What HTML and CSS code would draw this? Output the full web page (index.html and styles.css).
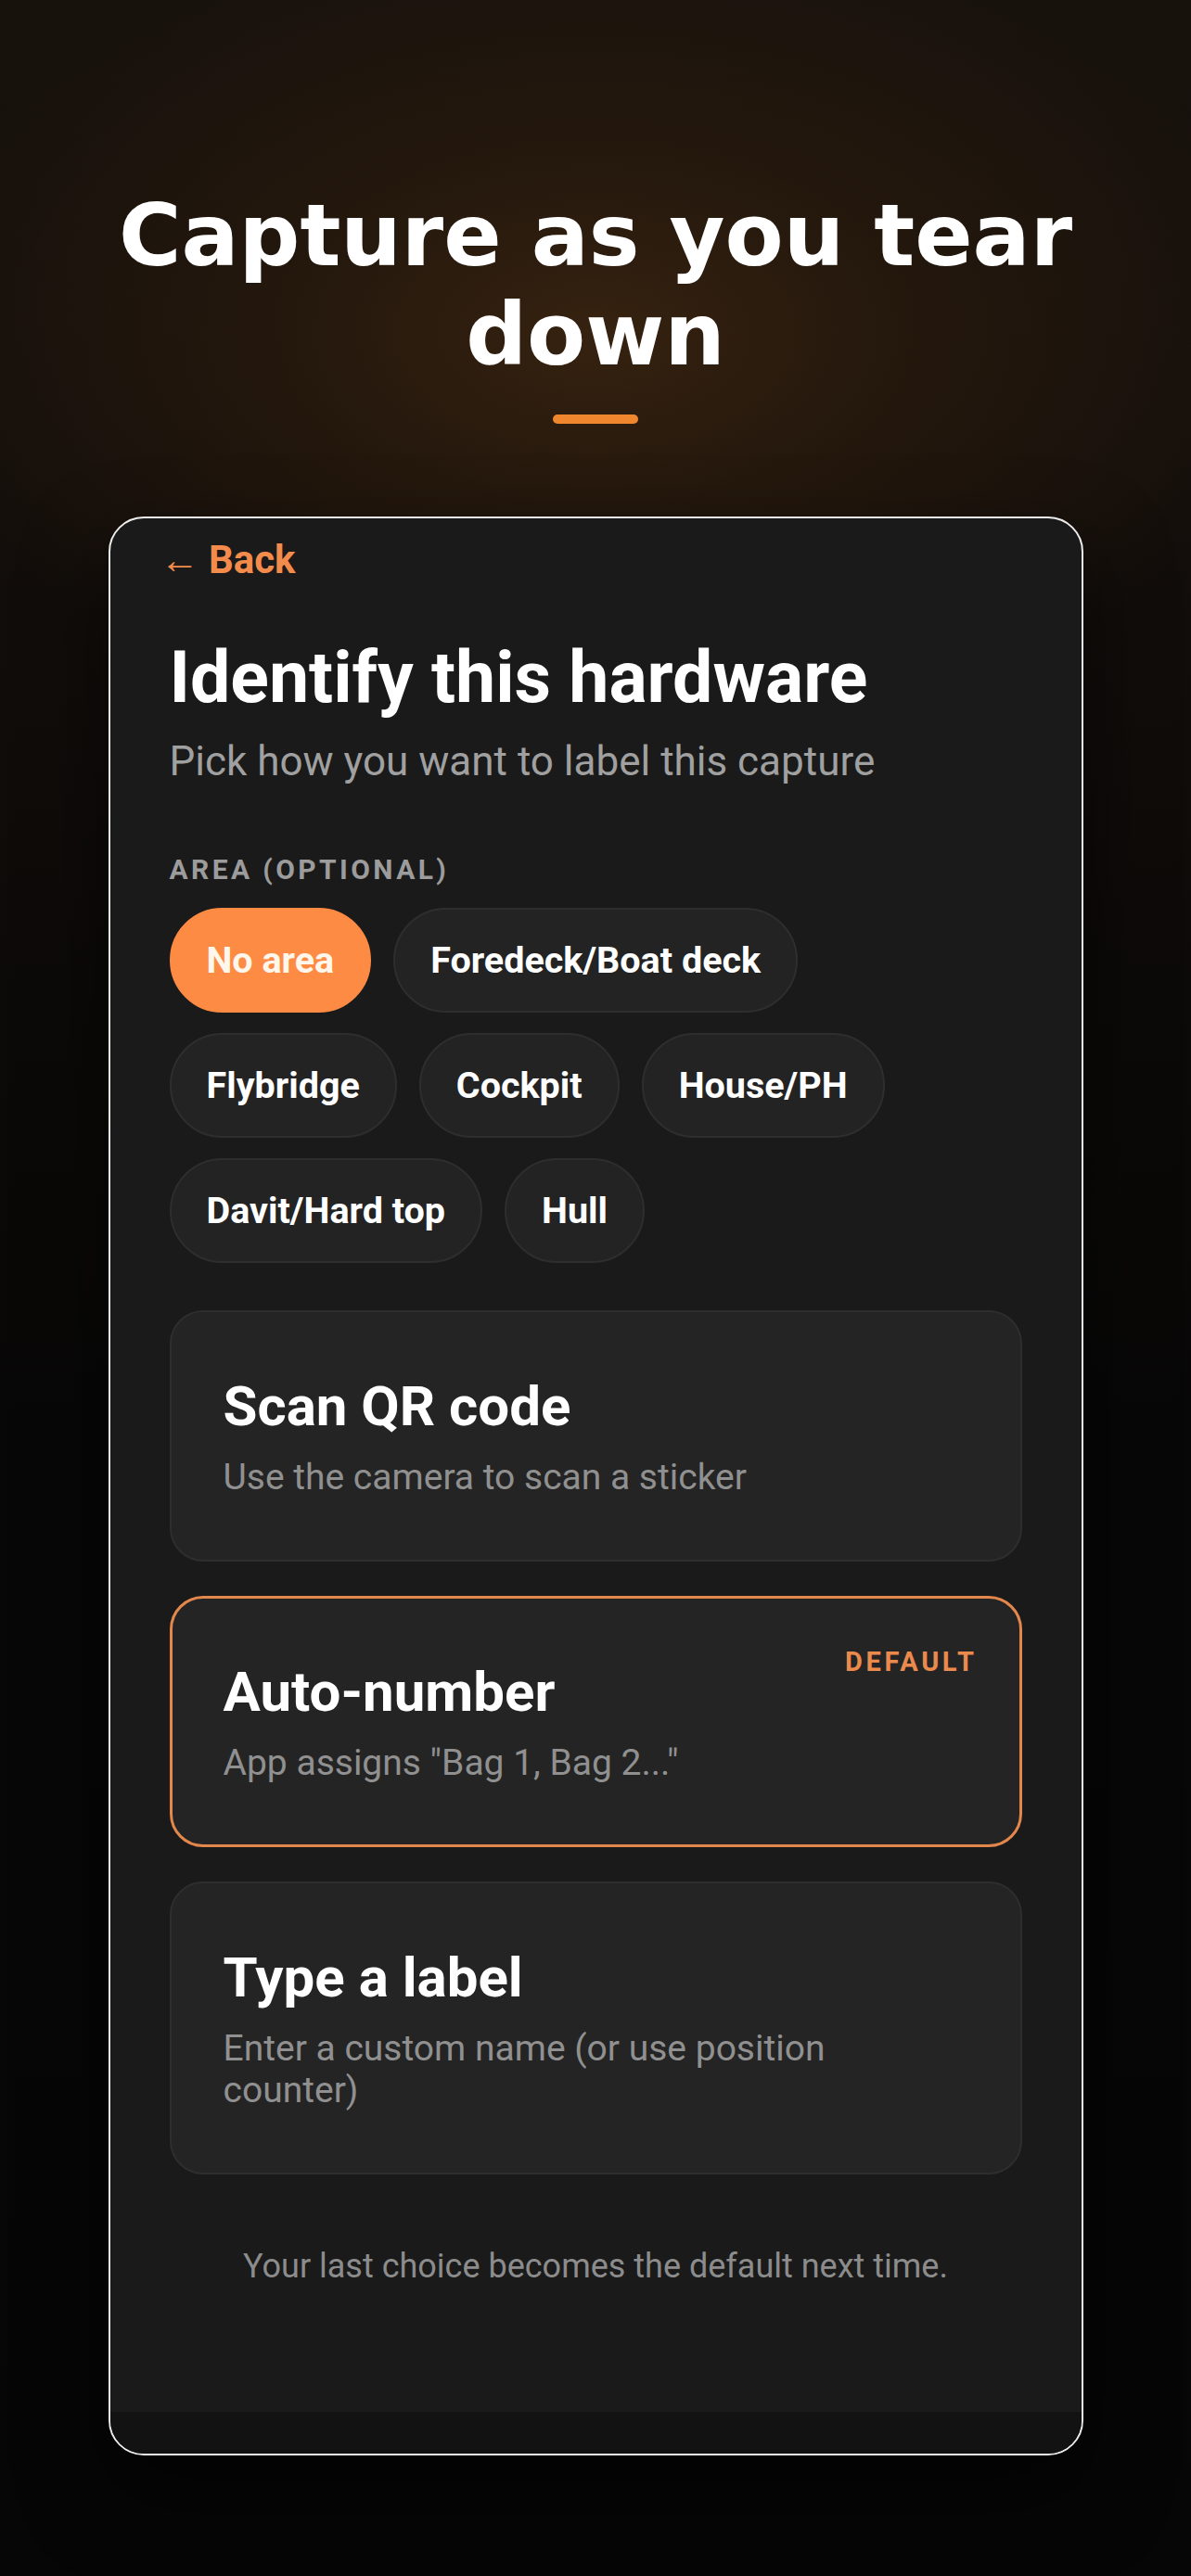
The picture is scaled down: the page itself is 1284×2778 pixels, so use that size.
FILE: index.html
```html
<!DOCTYPE html>
<html lang="en">
<head>
<meta charset="utf-8">
<title>Capture as you tear down</title>
<link rel="stylesheet" href="styles.css">
</head>
<body>
<header class="hero">
  <h1 class="hero-title">Capture as you tear down</h1>
  <div class="hero-bar"></div>
</header>
<main class="phone">
  <div class="screen">
    <a class="back"><span class="back-arrow">←</span> Back</a>
    <h2 class="screen-title">Identify this hardware</h2>
    <p class="screen-sub">Pick how you want to label this capture</p>
    <div class="section-label">AREA (OPTIONAL)</div>
    <div class="chips">
      <span class="chip chip--active">No area</span>
      <span class="chip">Foredeck/Boat deck</span>
      <span class="chip">Flybridge</span>
      <span class="chip">Cockpit</span>
      <span class="chip">House/PH</span>
      <span class="chip">Davit/Hard top</span>
      <span class="chip">Hull</span>
    </div>
    <div class="options">
      <div class="option">
        <div class="option-title">Scan QR code</div>
        <div class="option-desc">Use the camera to scan a sticker</div>
      </div>
      <div class="option option--selected">
        <span class="badge">DEFAULT</span>
        <div class="option-title">Auto-number</div>
        <div class="option-desc">App assigns "Bag 1, Bag 2..."</div>
      </div>
      <div class="option">
        <div class="option-title">Type a label</div>
        <div class="option-desc">Enter a custom name (or use position counter)</div>
      </div>
    </div>
    <p class="hint">Your last choice becomes the default next time.</p>
  </div>
  <div class="tabbar"></div>
</main>
</body>
</html>
```
FILE: styles.css
```css
* { box-sizing: border-box; }

html, body {
  margin: 0;
  padding: 0;
}

body {
  width: 1284px;
  min-height: 2778px;
  background:
    radial-gradient(ellipse 760px 440px at 50% 360px, rgba(54, 34, 16, 1) 0%, rgba(40, 26, 13, 0.85) 40%, rgba(22, 16, 11, 0) 100%),
    linear-gradient(180deg, #18120d 0%, #130e0b 20%, #0c0a08 38%, #080707 55%, #060606 100%);
  font-family: Roboto, "Liberation Sans", sans-serif;
  color: #fff;
  overflow: hidden;
}

.hero {
  padding: 201px 40px 0;
  text-align: center;
}

.hero-title {
  margin: 0;
  font-family: "DejaVu Sans", sans-serif;
  font-weight: 700;
  font-size: 92px;
  line-height: 107px;
  color: #ffffff;
}

.hero-bar {
  width: 92px;
  height: 10px;
  margin: 32px auto 0;
  border-radius: 5px;
  background: #f0872f;
}

.phone {
  width: 1051px;
  height: 2091px;
  margin: 100px auto 0;
  border: 2px solid #ececec;
  border-radius: 38px;
  background: #1a1a1a;
  overflow: hidden;
  display: flex;
  flex-direction: column;
  box-shadow: 0 40px 90px rgba(0, 0, 0, 0.55);
}

.screen {
  flex: 1;
  padding: 20px 64px 0;
}

.back {
  display: block;
  height: 50px;
  margin-left: -10px;
  font-size: 42px;
  line-height: 50px;
  font-weight: 700;
  color: #f28b4b;
}

.back-arrow {
  font-weight: 700;
}

.screen-title {
  margin: 55px 0 0;
  font-size: 77px;
  line-height: 94px;
  font-weight: 700;
  color: #ffffff;
}

.screen-sub {
  margin: 12px 0 0;
  font-size: 44px;
  line-height: 62px;
  font-weight: 400;
  color: #a0a0a0;
}

.section-label {
  margin-top: 68px;
  font-size: 30px;
  line-height: 36px;
  font-weight: 700;
  letter-spacing: 3.4px;
  color: #9c9c9c;
}

.chips {
  margin-top: 23px;
  display: flex;
  flex-wrap: wrap;
  gap: 22px 24px;
}

.chip {
  display: inline-block;
  padding: 31px 38px;
  border: 2px solid #2e2e2e;
  border-radius: 999px;
  background: #232323;
  font-size: 39.5px;
  line-height: 47px;
  font-weight: 700;
  color: #ffffff;
  white-space: nowrap;
}

.chip--active {
  background: #fd8b44;
  border-color: #fd8b44;
  color: #fff7ec;
}

.options {
  margin-top: 51px;
  display: flex;
  flex-direction: column;
  gap: 37px;
}

.option {
  position: relative;
  padding: 66px 56px;
  border: 2px solid #2e2e2e;
  border-radius: 36px;
  background: #242424;
}

.option--selected {
  padding: 65px 55px;
  border: 3px solid #e4874c;
}

.option-title {
  font-size: 60px;
  line-height: 72px;
  font-weight: 700;
  color: #ffffff;
}

.option-desc {
  margin-top: 18px;
  max-width: 760px;
  font-size: 39px;
  line-height: 45px;
  font-weight: 400;
  color: #909090;
}

.badge {
  position: absolute;
  top: 51px;
  right: 45px;
  font-size: 29px;
  line-height: 34px;
  font-weight: 700;
  letter-spacing: 3.6px;
  color: #eb8a4d;
}

.hint {
  margin: 74px 0 0;
  text-align: center;
  font-size: 36px;
  line-height: 50px;
  color: #8c8c8c;
}

.tabbar {
  height: 45px;
  background: #121212;
}
```
